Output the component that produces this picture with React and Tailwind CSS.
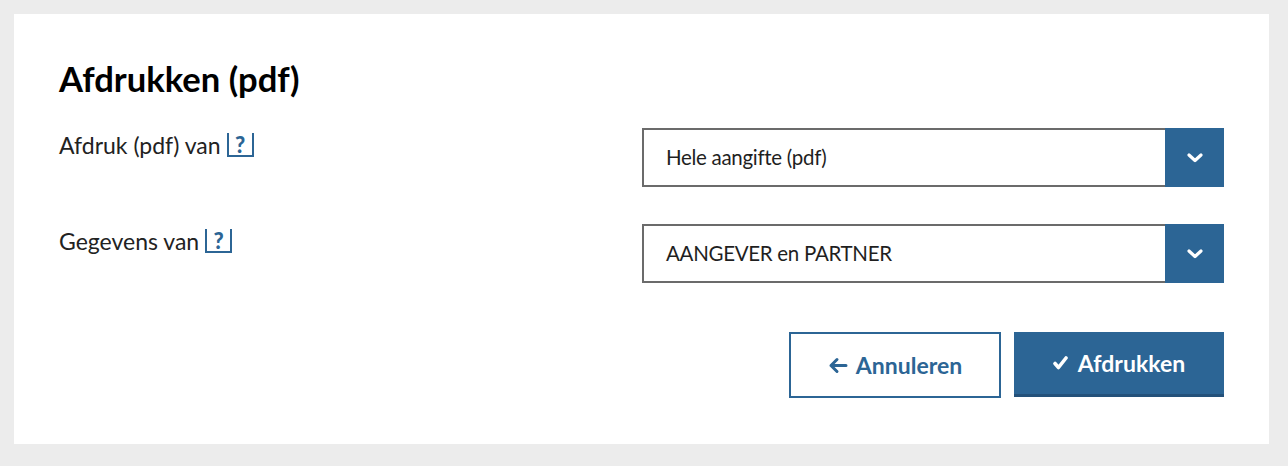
import { useState } from 'react'

const FIELDS = [
  { id: 'afdruk', label: 'Afdruk (pdf) van', value: 'Hele aangifte (pdf)' },
  { id: 'gegevens', label: 'Gegevens van', value: 'AANGEVER en PARTNER' },
]

function HelpButton() {
  return (
    <button
      type="button"
      className="ml-[6px] inline-flex h-[24px] w-[27px] items-center justify-center border-x-2 border-b-2 border-[#2c6595] pt-[1px] text-[22px] font-black leading-none text-[#2c6595]"
    >
      ?
    </button>
  )
}

function Chevron() {
  return (
    <svg width="16" height="10" viewBox="0 0 16 10" fill="none">
      <polyline points="2,2 8,7.5 14,2" stroke="white" strokeWidth="3.2" strokeLinecap="round" strokeLinejoin="round" />
    </svg>
  )
}

function SelectBox({ value }) {
  return (
    <div className="flex h-[59px] w-[582px] border-2 border-r-0 border-[#6b6b6b] bg-white">
      <div className="flex flex-1 items-center pl-[22px] text-[20.5px] tracking-[-0.3px] text-[#1f1f1f]">{value}</div>
      <div className="-my-[2px] flex w-[59px] items-center justify-center bg-[#2c6595]">
        <Chevron />
      </div>
    </div>
  )
}

export default function App() {
  const [values] = useState(FIELDS)

  return (
    <div className="min-h-screen bg-[#ececec] p-[14px]" style={{ fontFamily: 'Lato, "Noto Sans", sans-serif' }}>
      <div className="h-[430px] w-[1255px] bg-white px-[45px] pt-[43px]">
        <h1 className="text-[34.6px] font-bold leading-[44px] text-black">Afdrukken (pdf)</h1>

        <div className="mt-[27px] space-y-[37px]">
          {values.map(f => (
            <div key={f.id} className="flex items-start justify-between">
              <div className="flex items-center pt-[3px] text-[23px] leading-[28px] text-[#222]">
                <span>{f.label}</span>
                <HelpButton />
              </div>
              <SelectBox value={f.value} />
            </div>
          ))}
        </div>

        <div className="mt-[49px] flex justify-end gap-[13px]">
          <button
            type="button"
            className="flex h-[66px] w-[212px] items-center justify-center gap-[8px] border-2 border-[#2c6595] bg-white text-[23px] font-bold text-[#2c6595]"
          >
            <svg width="20" height="17" viewBox="0 0 20 17" fill="none">
              <path d="M9 2.5 L3 8.5 L9 14.5 M3 8.5 H18" stroke="#2c6595" strokeWidth="3" strokeLinecap="round" strokeLinejoin="round" />
            </svg>
            Annuleren
          </button>
          <button
            type="button"
            className="flex h-[65px] w-[210px] items-center justify-center gap-[10px] border-b-[3px] border-[#24517a] bg-[#2c6595] text-[23px] font-bold text-white"
          >
            <svg width="15" height="14" viewBox="0 0 15 14" fill="none">
              <path d="M2 7.5 L5.5 11.5 L13 2" stroke="white" strokeWidth="3.6" strokeLinecap="round" strokeLinejoin="round" />
            </svg>
            Afdrukken
          </button>
        </div>
      </div>
    </div>
  )
}
